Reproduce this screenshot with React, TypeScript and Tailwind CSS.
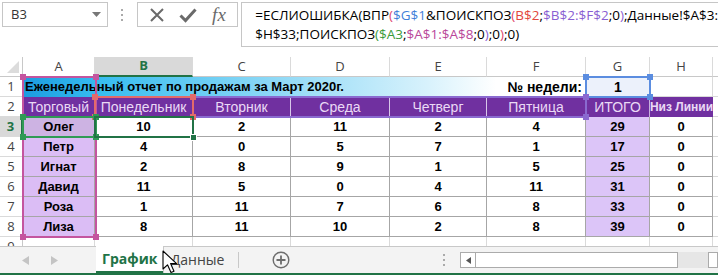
import React from "react";

const colW = ["w-[72px]", "w-[98px]", "w-[98px]", "w-[99px]", "w-[97px]", "w-[99px]", "w-[64px]", "w-[63px]"];
const letters = ["A", "B", "C", "D", "E", "F", "G", "H"];

const rows: [string, number[]][] = [
  ["Олег", [10, 2, 11, 2, 4, 29, 0]],
  ["Петр", [4, 0, 5, 7, 1, 17, 0]],
  ["Игнат", [2, 8, 9, 1, 5, 25, 0]],
  ["Давид", [11, 5, 0, 4, 11, 31, 0]],
  ["Роза", [1, 11, 7, 6, 8, 33, 0]],
  ["Лиза", [8, 11, 10, 2, 8, 39, 0]],
];

const days = ["Понедельник", "Вторник", "Среда", "Четверг", "Пятница"];

const cellFont = { fontFamily: '"Liberation Sans", Arial, sans-serif' };
const uiFont = { fontFamily: '"Open Sans", "Noto Sans", sans-serif' };

function Corners({ color }: { color: string }) {
  return (
    <>
      <div className={`absolute -left-[4px] -top-[4px] w-[6px] h-[6px] ${color}`} />
      <div className={`absolute -right-[4px] -top-[4px] w-[6px] h-[6px] ${color}`} />
      <div className={`absolute -left-[4px] -bottom-[4px] w-[6px] h-[6px] ${color}`} />
      <div className={`absolute -right-[4px] -bottom-[4px] w-[6px] h-[6px] ${color}`} />
    </>
  );
}

function RowHead({ n, active }: { n: number; active?: boolean }) {
  return (
    <div
      className={`w-[23px] shrink-0 h-full flex items-center justify-center text-[13px] border-b border-[#dadada] ${
        active ? "bg-[#d9d9d9] text-[#217346] font-bold border-r-2 border-r-[#217346]" : "text-[#444] border-r border-r-[#c8c8c8]"
      }`}
      style={uiFont}
    >
      {n}
    </div>
  );
}

export default function App() {
  return (
    <div className="relative w-[718px] h-[275px] overflow-hidden bg-white select-none">
      {/* formula bar */}
      <div className="h-[57px] flex items-start pt-[2px]" style={uiFont}>
        <div className="ml-[2px] w-[113px] h-[25px] border border-[#c6c6c6] flex items-center justify-between pl-[8px] pr-[6px]">
          <span className="text-[13px] text-[#333]">B3</span>
          <svg width="9" height="5" viewBox="0 0 9 5"><path d="M0 0h9L4.5 5z" fill="#777" /></svg>
        </div>
        <div className="w-[31px] h-[25px] flex flex-col items-center justify-center gap-[3px]">
          <div className="w-[2px] h-[2px] bg-[#aaa]" />
          <div className="w-[2px] h-[2px] bg-[#aaa]" />
          <div className="w-[2px] h-[2px] bg-[#aaa]" />
        </div>
        <div className="w-[109px] h-[25px] border border-[#c6c6c6] flex items-center justify-around px-[4px]">
          <svg width="16" height="16" viewBox="0 0 16 16"><path d="M2 2L14 14M14 2L2 14" stroke="#6a6a6a" strokeWidth="2" /></svg>
          <svg width="18" height="16" viewBox="0 0 18 16"><path d="M1.5 8.5L6.5 13.5L16.5 2.5" stroke="#6a6a6a" strokeWidth="3" fill="none" /></svg>
          <span className="text-[19px] italic text-[#6a6a6a] leading-none" style={{ fontFamily: '"Liberation Serif", serif' }}>
            fx
          </span>
        </div>
        <div className="ml-[3px] flex-1 h-[45px] border border-r-0 border-[#c6c6c6] pl-[13px] pt-[3px] text-[13.5px] leading-[19px] text-black whitespace-nowrap">
          <div>
            =ЕСЛИОШИБКА(ВПР<span className="text-[#e0486e]">(</span>
            <span className="text-[#3f7fd9]">$G$1</span>&amp;ПОИСКПОЗ<span className="text-[#e0486e]">(</span>
            <span className="text-[#e2463d]">B$2</span>;<span className="text-[#8a5fd2]">$B$2:$F$2</span>;0
            <span className="text-[#8a5fd2]">)</span>;Данные!$A$3:
          </div>
          <div>
            $H$33;ПОИСКПОЗ<span className="text-[#3a9b3a]">(</span>
            <span className="text-[#3a9b3a]">$A3</span>;<span className="text-[#b9479a]">$A$1:$A$8</span>;0
            <span className="text-[#8a5fd2]">)</span>;0<span className="text-[#e0486e]">)</span>;0)
          </div>
        </div>
      </div>

      {/* grid */}
      <div className="relative">
        {/* column headers */}
        <div className="flex h-[20px]" style={uiFont}>
          <div className="w-[23px] shrink-0 h-full border-r border-b border-[#c8c8c8] relative">
            <svg className="absolute right-[3px] bottom-[3px]" width="12" height="12" viewBox="0 0 12 12"><path d="M12 0V12H0z" fill="#dcdcdc" /></svg>
          </div>
          {letters.map((l, i) => (
            <div
              key={l}
              className={`${colW[i]} shrink-0 h-full flex items-center justify-center text-[13px] border-r border-[#dadada] ${
                i === 1 ? "bg-[#d9d9d9] text-[#217346] font-bold border-b-2 border-b-[#217346]" : "text-[#444] border-b border-b-[#c8c8c8]"
              }`}
            >
              {l}
            </div>
          ))}
          <div className="flex-1 border-b border-[#c8c8c8]" />
        </div>

        {/* row 1 */}
        <div className="flex h-[20px]" style={cellFont}>
          <RowHead n={1} />
          <div className="w-[563px] shrink-0 h-full flex items-center justify-between pl-[2px] pr-[4px] text-[13px] font-bold text-black bg-[linear-gradient(90deg,#1b9ce0_0%,#38bdf0_14%,#8fd9f6_45%,#d8f2fc_72%,#ffffff_84%)]">
            <span>Еженедельный отчет по продажам за Март 2020г.</span>
            <span className="text-[14px]">№ недели:</span>
          </div>
          <div className="w-[64px] shrink-0 h-full flex items-center justify-center text-[14px] font-bold bg-[#ecf1fb]">1</div>
          <div className="w-[63px] shrink-0 h-full border-r border-b border-[#dadada]" />
          <div className="flex-1 border-b border-[#dadada]" />
        </div>

        {/* row 2 */}
        <div className="flex h-[20px]" style={cellFont}>
          <RowHead n={2} />
          <div className="w-[72px] shrink-0 h-full bg-[#7030a0] text-[#ead9f5] text-[14px] flex items-center justify-center border-r border-[#c8b0dd]">
            Торговый
          </div>
          {days.map((d, i) => (
            <div
              key={d}
              className={`${colW[i + 1]} shrink-0 h-full bg-[#7030a0] text-[#ead9f5] text-[14px] flex items-center justify-center border-r border-[#d8c6ea]`}
            >
              {d}
            </div>
          ))}
          <div className="w-[64px] shrink-0 h-full bg-[#7030a0] text-[#ead9f5] text-[14px] flex items-center justify-center border-r border-[#c8b0dd]">
            ИТОГО
          </div>
          <div className="w-[63px] shrink-0 h-full bg-[#7030a0] text-[#ead9f5] text-[12px] font-bold flex items-center justify-center whitespace-nowrap">
            Низ Линии
          </div>
          <div className="flex-1 border-b border-[#dadada]" />
        </div>

        {/* data rows */}
        {rows.map(([name, vals], r) => (
          <div key={name} className="flex h-[20px]" style={cellFont}>
            <RowHead n={r + 3} active={r === 0} />
            <div
              className={`w-[72px] shrink-0 h-full flex items-center justify-center text-[13px] font-bold text-black border-r border-b border-[#a6a6a6] ${
                r === 0 ? "bg-[#cdb3e3]" : "bg-[#dbbdf5]"
              }`}
            >
              {name}
            </div>
            {vals.map((v, i) => (
              <div
                key={i}
                className={`${colW[i + 1]} shrink-0 h-full flex items-center justify-center text-[13px] font-bold text-black border-r border-b border-[#a6a6a6] ${
                  i === 5 ? "bg-[#dcc5f8]" : ""
                }`}
              >
                {v}
              </div>
            ))}
            <div className="flex-1 border-b border-[#dadada]" />
          </div>
        ))}

        {/* row 9 partial */}
        <div className="flex h-[20px]">
          <RowHead n={9} />
          {colW.map((w, i) => (
            <div key={i} className={`${w} shrink-0 h-full border-r border-[#dadada]`} />
          ))}
        </div>

        {/* reference highlights */}
        <div className="absolute left-[22px] top-[19px] w-[75px] h-[162px] border-2 border-[#c4559f]">
          <Corners color="bg-[#c4559f]" />
        </div>
        <div className="absolute left-[585px] top-[19px] w-[66px] h-[22px] border-2 border-[#5b8de0]">
          <Corners color="bg-[#5b8de0]" />
        </div>
        <div className="absolute left-[94px] top-[39px] w-[493px] h-[22px] border-2 border-[#8a6ad0]">
          <Corners color="bg-[#8a6ad0]" />
        </div>
        <div className="absolute left-[94px] top-[39px] w-[100px] h-[22px] border-2 border-[#e46a6a]">
          <Corners color="bg-[#e46a6a]" />
        </div>
        <div className="absolute left-[22px] top-[59px] w-[75px] h-[22px] border-2 border-[#2f9a55]">
          <Corners color="bg-[#2f9a55]" />
        </div>
        <div className="absolute left-[94px] top-[59px] w-[100px] h-[22px] border-2 border-[#217346]">
          <div className="absolute -right-[5px] -bottom-[5px] w-[7px] h-[7px] bg-[#217346] border border-white" />
        </div>
      </div>

      {/* sheet tabs */}
      <div className="absolute left-0 right-0 top-[246px] h-[27px] bg-[#f3f3f3] border-t border-[#c8c8c8] flex items-stretch" style={uiFont}>
        <div className="w-[97px] flex items-center pl-[22px] gap-[22px] text-[#c4c4c4]">
          <svg width="7" height="9" viewBox="0 0 7 9"><path d="M7 0V9L0 4.5z" fill="#c4c4c4" /></svg>
          <svg width="7" height="9" viewBox="0 0 7 9"><path d="M0 0V9L7 4.5z" fill="#c4c4c4" /></svg>
        </div>
        <div className="w-[68px] -mt-[1px] bg-white border-b-2 border-[#217346] flex items-center justify-center text-[14px] font-bold text-[#217346]">
          График
        </div>
        <div className="w-[77px] border-l border-[#c8c8c8] flex items-center justify-end text-[14px] text-[#444]">
          <span className="border-r border-[#c8c8c8] pr-[14px] leading-[16px]">Данные</span>
        </div>
        <div className="w-[84px] flex items-center justify-center">
          <svg width="18" height="18" viewBox="0 0 18 18">
            <circle cx="9" cy="9" r="7.8" fill="none" stroke="#6d6d6d" strokeWidth="1.4" />
            <path d="M9 4.5V13.5M4.5 9H13.5" stroke="#6d6d6d" strokeWidth="1.8" />
          </svg>
        </div>
        <div className="w-[139px] flex flex-col items-end justify-center gap-[3px] pr-[15px]">
          <div className="w-[2px] h-[2px] bg-[#aaa]" />
          <div className="w-[2px] h-[2px] bg-[#aaa]" />
          <div className="w-[2px] h-[2px] bg-[#aaa]" />
        </div>
        <div className="flex items-center">
          <div className="w-[218px] h-[16px] border border-[#ababab] flex bg-white">
            <div className="w-[15px] h-full border-r border-[#ababab] flex items-center justify-center">
              <svg width="5" height="7" viewBox="0 0 5 7"><path d="M5 0V7L0 3.5z" fill="#555" /></svg>
            </div>
          </div>
          <div className="w-[30px] h-[16px] bg-[#e6e6e6]" />
          <div className="w-[10px] h-[16px] border border-[#ababab] bg-white" />
        </div>
      </div>
      <div className="absolute left-0 right-0 bottom-0 h-[2px] bg-[#217346]" />

      {/* mouse cursor */}
      <svg className="absolute left-[162px] top-[250px]" width="20" height="26" viewBox="0 0 20 26">
        <path d="M1 1V19L5.5 14.8L9 22.5L12 21.2L8.6 13.6H14.6Z" fill="#fff" stroke="#000" strokeWidth="1.1" strokeLinejoin="round" />
      </svg>
    </div>
  );
}
